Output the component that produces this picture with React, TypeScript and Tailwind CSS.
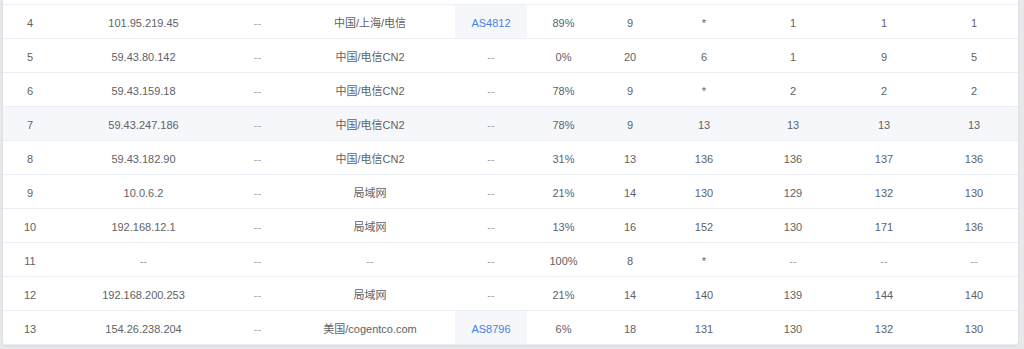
import React from "react";

type Row = {
    hop: number;
    ip: string;
    host: string;
    loc: string;
    asn: string;
    loss: string;
    sent: string;
    last: string;
    best: string;
    worst: string;
    avg: string;
};

const ROWS: Row[] = [
    { hop: 4, ip: "101.95.219.45", host: "--", loc: "中国/上海/电信", asn: "AS4812", loss: "89%", sent: "9", last: "*", best: "1", worst: "1", avg: "1" },
    { hop: 5, ip: "59.43.80.142", host: "--", loc: "中国/电信CN2", asn: "--", loss: "0%", sent: "20", last: "6", best: "1", worst: "9", avg: "5" },
    { hop: 6, ip: "59.43.159.18", host: "--", loc: "中国/电信CN2", asn: "--", loss: "78%", sent: "9", last: "*", best: "2", worst: "2", avg: "2" },
    { hop: 7, ip: "59.43.247.186", host: "--", loc: "中国/电信CN2", asn: "--", loss: "78%", sent: "9", last: "13", best: "13", worst: "13", avg: "13" },
    { hop: 8, ip: "59.43.182.90", host: "--", loc: "中国/电信CN2", asn: "--", loss: "31%", sent: "13", last: "136", best: "136", worst: "137", avg: "136" },
    { hop: 9, ip: "10.0.6.2", host: "--", loc: "局域网", asn: "--", loss: "21%", sent: "14", last: "130", best: "129", worst: "132", avg: "130" },
    { hop: 10, ip: "192.168.12.1", host: "--", loc: "局域网", asn: "--", loss: "13%", sent: "16", last: "152", best: "130", worst: "171", avg: "136" },
    { hop: 11, ip: "--", host: "--", loc: "--", asn: "--", loss: "100%", sent: "8", last: "*", best: "--", worst: "--", avg: "--" },
    { hop: 12, ip: "192.168.200.253", host: "--", loc: "局域网", asn: "--", loss: "21%", sent: "14", last: "140", best: "139", worst: "144", avg: "140" },
    { hop: 13, ip: "154.26.238.204", host: "--", loc: "美国/cogentco.com", asn: "AS8796", loss: "6%", sent: "18", last: "131", best: "130", worst: "132", avg: "130" },
];

// column widths in px, card is 1015 wide
const WIDTHS = [54, 173, 55, 170, 72, 73, 60, 88, 90, 92, 88];

function Cell({ children, dim, className }: { children: React.ReactNode; dim?: boolean; className?: string }) {
    return (
        <td className={`h-[34px] border-b border-[#ebeef5] p-0 pt-[3px] text-center align-middle ${dim ? "text-[#9fa2a8]" : "text-[#606266]"} ${className ?? ""}`}>
            {children}
        </td>
    );
}

export default function App() {
    return (
        <div className="h-[349px] w-[1024px] overflow-hidden bg-[#e6e8eb] pl-[3px] pr-[6px]">
            <div className="rounded-b-[4px] bg-white pt-[4px] shadow-[0_1px_3px_rgba(0,0,0,0.08)]">
                <table
                    className="w-full table-fixed border-collapse border-t border-[#ebeef5] text-[11px] leading-none"
                    style={{ fontFamily: '"Liberation Sans", "Noto Sans CJK SC", sans-serif' }}
                >
                    <colgroup>
                        {WIDTHS.map((w, i) => (
                            <col key={i} style={{ width: w }} />
                        ))}
                    </colgroup>
                    <tbody>
                        {ROWS.map((r) => {
                            const hasAsn = r.asn !== "--";
                            return (
                                <tr key={r.hop} className={r.hop === 7 ? "bg-[#f5f7fa]" : ""}>
                                    <Cell>{r.hop}</Cell>
                                    <Cell dim={r.ip === "--"}>{r.ip}</Cell>
                                    <Cell dim>{r.host}</Cell>
                                    <Cell dim={r.loc === "--"}>{r.loc}</Cell>
                                    <Cell dim={!hasAsn} className={hasAsn ? "bg-[#f5f7fa]" : ""}>
                                        {hasAsn ? <span className="text-[#4a80e8]">{r.asn}</span> : r.asn}
                                    </Cell>
                                    <Cell>{r.loss}</Cell>
                                    <Cell>{r.sent}</Cell>
                                    <Cell>{r.last}</Cell>
                                    <Cell dim={r.best === "--"}>{r.best}</Cell>
                                    <Cell dim={r.worst === "--"}>{r.worst}</Cell>
                                    <Cell dim={r.avg === "--"}>{r.avg}</Cell>
                                </tr>
                            );
                        })}
                    </tbody>
                </table>
            </div>
        </div>
    );
}
